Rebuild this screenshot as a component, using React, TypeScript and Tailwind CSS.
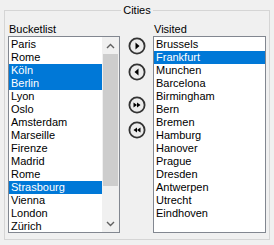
const bucketlist = [
  "Paris",
  "Rome",
  "Köln",
  "Berlin",
  "Lyon",
  "Oslo",
  "Amsterdam",
  "Marseille",
  "Firenze",
  "Madrid",
  "Rome",
  "Strasbourg",
  "Vienna",
  "London",
  "Zürich",
];
const bucketSelected = [2, 3, 11];

const visited = [
  "Brussels",
  "Frankfurt",
  "Munchen",
  "Barcelona",
  "Birmingham",
  "Bern",
  "Bremen",
  "Hamburg",
  "Hanover",
  "Prague",
  "Dresden",
  "Antwerpen",
  "Utrecht",
  "Eindhoven",
];
const visitedSelected = [1];

function Row({ label, selected }: { label: string; selected: boolean }) {
  return (
    <div
      className={
        selected
          ? "h-[13px] whitespace-nowrap bg-[#0078d7] pl-[2px] leading-[13px] text-white"
          : "h-[13px] whitespace-nowrap pl-[2px] leading-[13px] text-black"
      }
    >
      {label}
    </div>
  );
}

function Scrollbar() {
  return (
    <div className="flex w-[17px] shrink-0 flex-col bg-[#f0f0f0]">
      <div className="flex h-[17px] items-center justify-center">
        <svg width="9" height="6" viewBox="0 0 9 6">
          <polyline points="1,5 4.5,1.5 8,5" fill="none" stroke="#606060" strokeWidth="1.4" />
        </svg>
      </div>
      <div className="flex-1 px-[1px]">
        <div className="h-[132px] bg-[#cdcdcd]" />
      </div>
      <div className="flex h-[17px] items-center justify-center">
        <svg width="9" height="6" viewBox="0 0 9 6">
          <polyline points="1,1 4.5,4.5 8,1" fill="none" stroke="#606060" strokeWidth="1.4" />
        </svg>
      </div>
    </div>
  );
}

type Dir = "right" | "left" | "allRight" | "allLeft";

function RoundButton({ dir }: { dir: Dir }) {
  return (
    <button className="flex h-[18px] w-[18px] items-center justify-center">
      <svg width="18" height="18" viewBox="0 0 18 18">
        <circle cx="9" cy="9" r="7.6" fill="#ececec" stroke="#333" strokeWidth="1.8" />
        {dir === "right" && <polygon points="7.5,5.5 11.5,9 7.5,12.5" fill="#000" />}
        {dir === "left" && <polygon points="10.5,5.5 6.5,9 10.5,12.5" fill="#000" />}
        {dir === "allRight" && (
          <>
            <polygon points="5.5,6.5 9,9 5.5,11.5" fill="#000" />
            <polygon points="9,6.5 12.5,9 9,11.5" fill="#000" />
          </>
        )}
        {dir === "allLeft" && (
          <>
            <polygon points="9,6.5 5.5,9 9,11.5" fill="#000" />
            <polygon points="12.5,6.5 9,9 12.5,11.5" fill="#000" />
          </>
        )}
      </svg>
    </button>
  );
}

export default function App() {
  return (
    <div
      className="h-[245px] w-[274px] bg-[#f0f0f0] px-[4px] pt-[4px] text-[11px] text-black"
      style={{ fontFamily: '"Liberation Sans", Arial, sans-serif' }}
    >
      <fieldset className="h-[236px] border border-[#d5d5d5] px-[3px]">
        <legend className="mx-auto px-[2px] leading-[13px]">Cities</legend>
        <div className="mt-[6px] flex">
          <div className="w-[112px]">
            <div className="h-[13px] pl-[1px] leading-[13px]">Bucketlist</div>
            <div className="flex h-[197px] border border-[#828790] bg-white">
              <div className="flex-1 overflow-hidden pt-[1px]">
                {bucketlist.map((c, i) => (
                  <Row key={i} label={c} selected={bucketSelected.includes(i)} />
                ))}
              </div>
              <Scrollbar />
            </div>
          </div>

          <div className="flex w-[33px] flex-col items-center pt-[14px]">
            <RoundButton dir="right" />
            <div className="mt-[8px]">
              <RoundButton dir="left" />
            </div>
            <div className="mt-[15px]">
              <RoundButton dir="allRight" />
            </div>
            <div className="mt-[7px]">
              <RoundButton dir="allLeft" />
            </div>
          </div>

          <div className="w-[113px]">
            <div className="h-[13px] pl-[1px] leading-[13px]">Visited</div>
            <div className="h-[197px] overflow-hidden border border-[#828790] bg-white pt-[1px]">
              {visited.map((c, i) => (
                <Row key={i} label={c} selected={visitedSelected.includes(i)} />
              ))}
            </div>
          </div>
        </div>
      </fieldset>
    </div>
  );
}
